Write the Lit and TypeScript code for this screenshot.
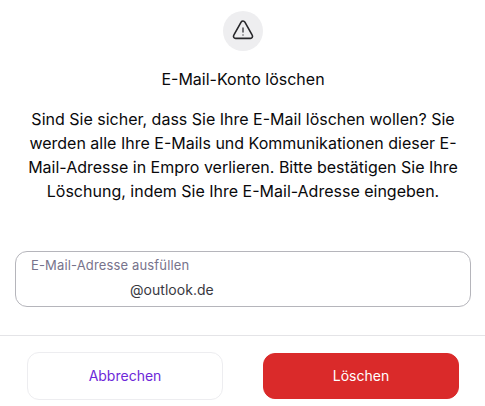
import { LitElement, html, css } from "lit";
import { customElement } from "lit/decorators.js";

@customElement("app-root")
export class AppRoot extends LitElement {
  static styles = css`
    :host { display: flex; flex-direction: column; box-sizing: border-box; height: 406px; background: #fff; color: #09090b; font-family: Inter, sans-serif; font-size: 16px; line-height: 24px; overflow: hidden; }
    * { box-sizing: border-box; }
    .content { display: flex; flex-direction: column; align-items: center; height: 335px; padding: 11px 14px 0 15px; }
    .badge { display: flex; align-items: center; justify-content: center; width: 40px; height: 40px; border-radius: 50%; background: #eeeef0; }
    .title { margin: 16px 0 0; font-size: 16px; font-weight: 400; line-height: 24px; }
    .message { margin: 16px 0 0; text-align: center; white-space: nowrap; }
    .field { display: flex; flex-direction: column; width: 100%; height: 56px; margin-top: 48px; padding: 5px 15px; border: 1px solid #b5b5bb; border-radius: 12px; }
    .label { font-size: 13px; letter-spacing: 0.15px; line-height: 16px; color: #77738c; }
    .value { padding-left: 99px; margin-top: 5px; font-size: 14px; letter-spacing: 0.03px; line-height: 24px; color: #39393f; }
    .actions { display: flex; gap: 40px; height: 71px; padding: 16px 26px 0 27px; border-top: 1px solid #e4e4e7; }
    button { flex: 1; height: 48px; padding: 0; border: 1px solid #ededf0; border-radius: 12px; background: #fff; color: #6d28d9; font: 400 14px/24px Inter, sans-serif; }
    .delete { height: 46px; margin-top: 1px; border-color: #da2a2a; background: #da2a2a; color: #fff; }
  `;
  render() {
    return html`
      <div class="content">
        <div class="badge">
          <svg width="24" height="24" viewBox="0 0 24 24" fill="none" stroke="#27272a" stroke-width="1.6" stroke-linecap="round" stroke-linejoin="round">
            <path d="M10.1 3.1 2.8 16.2A2.1 2.1 0 0 0 4.6 19.4H19.4A2.1 2.1 0 0 0 21.2 16.2L13.9 3.1A2.2 2.2 0 0 0 10.1 3.1Z"/><path stroke="#55555a" d="M12 9v4M12 16v.01"/>
          </svg>
        </div>
        <h1 class="title">E-Mail-Konto löschen</h1>
        <p class="message">Sind Sie sicher, dass Sie Ihre E-Mail löschen wollen? Sie<br>werden alle Ihre E-Mails und Kommunikationen dieser E-<br>Mail-Adresse in Empro verlieren. Bitte bestätigen Sie Ihre<br>Löschung, indem Sie Ihre E-Mail-Adresse eingeben.</p>
        <div class="field"><span class="label">E-Mail-Adresse ausfüllen</span><span class="value">@outlook.de</span></div>
      </div>
      <div class="actions"><button>Abbrechen</button><button class="delete">Löschen</button></div>
    `;
  }
}
